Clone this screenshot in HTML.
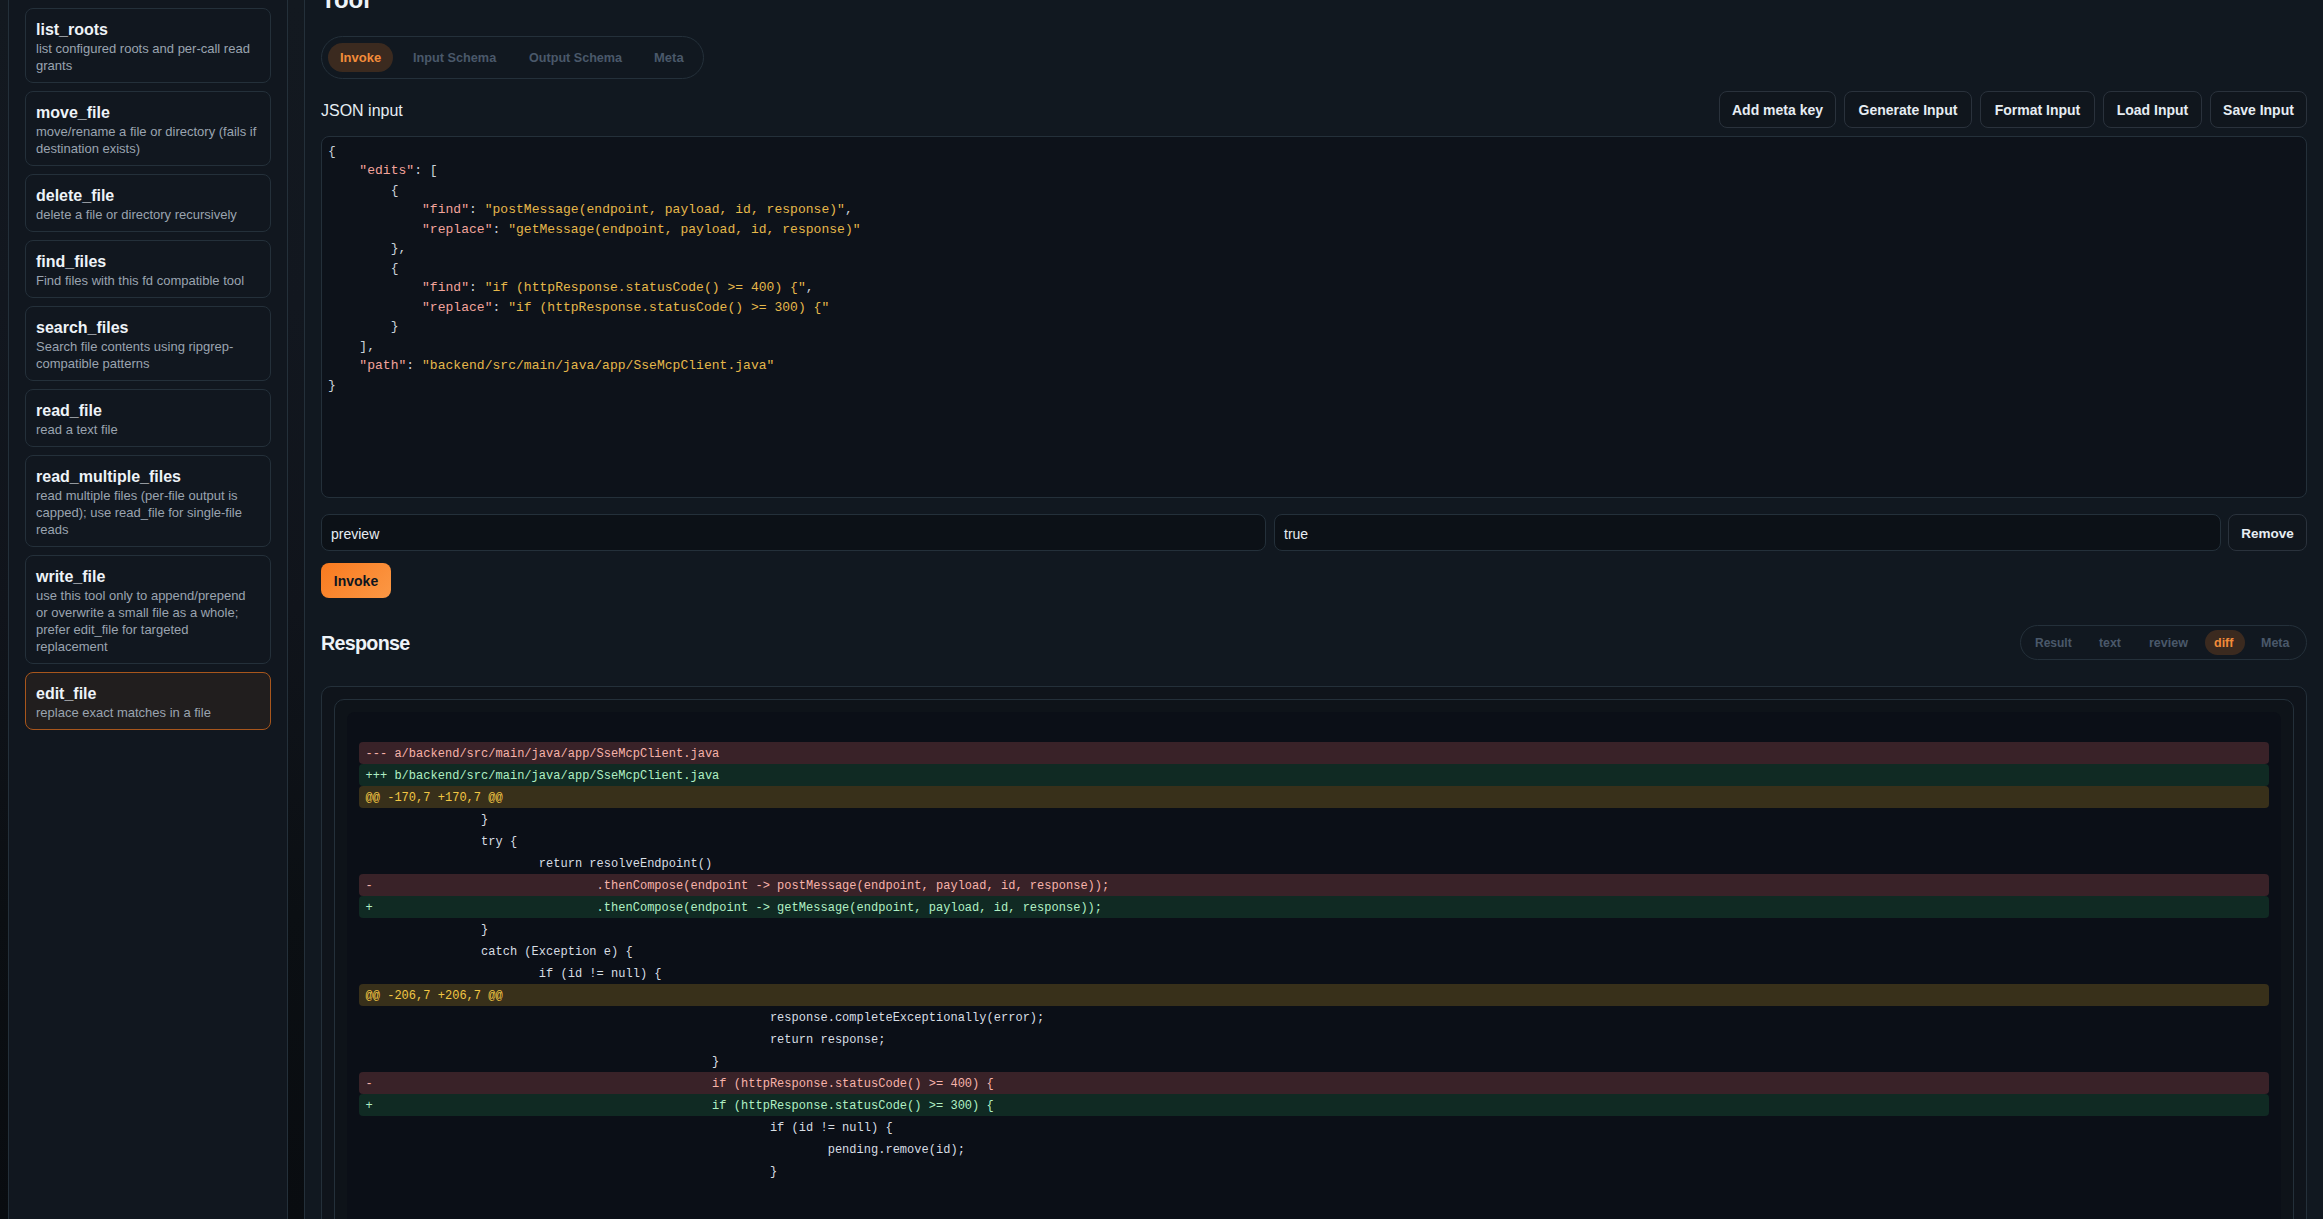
<!DOCTYPE html>
<html><head><meta charset="utf-8">
<style>
*{box-sizing:border-box;margin:0;padding:0}
html,body{width:2323px;height:1219px;overflow:hidden}
body{position:relative;background:linear-gradient(180deg,#131920 0%,#12171f 25%,#10141b 50%,#0b0f13 75%,#090c10 100%);font-family:"Liberation Sans",sans-serif;color:#e6edf3}
.abs{position:absolute}
#side{position:absolute;left:8px;top:-20px;width:280px;height:1300px;background:#11171f;border:1px solid #24303a}
.card{position:absolute;left:25px;width:246px;border:1px solid #24303a;border-radius:8px;background:#11171f;padding:10px 10px 8px 10px}
.card .t{font-size:16px;font-weight:700;line-height:21px;color:#eef3f8;white-space:nowrap}
.card .d{font-size:13px;line-height:17px;color:#9aa4b0}
.card.sel{border-color:#a8561c;background:#211e1e}
#main{position:absolute;left:304px;top:-20px;width:2100px;height:1300px;background:#111820;border-left:1px solid #24303a}
.tabs{position:absolute;border:1px solid #24303a;border-radius:999px}
.tab{position:absolute;font-weight:700;color:#4a586a;white-space:nowrap}
.pill{position:absolute;background:#3b2a1f;border-radius:999px}
.btn{position:absolute;top:91px;height:37px;border:1px solid #2a323c;border-radius:8px;background:#10161d;font-size:14px;font-weight:700;color:#e6edf3;display:flex;align-items:center;justify-content:center;white-space:nowrap}
.mono{font-family:"Liberation Mono",monospace}
#ta{position:absolute;left:321px;top:136px;width:1986px;height:362px;border:1px solid #24303a;border-radius:8px;background:#0d121a}
#json{position:absolute;left:328px;top:141.5px;font-size:13px;line-height:19.5px;letter-spacing:0.03px;color:#c9d1d9;white-space:pre}
.k{color:#f3a49c}.s{color:#e6b84a}
.inp{position:absolute;top:514px;height:37px;border:1px solid #24303a;border-radius:8px;background:#0c1117;font-size:14px;color:#e6edf3;padding-left:9px;line-height:39px}
#out{position:absolute;left:321px;top:686px;width:1986px;height:600px;border:1px solid #24303a;border-radius:10px;background:#0f141b}
#in2{position:absolute;left:334px;top:699px;width:1960px;height:600px;border:1px solid #24303a;border-radius:10px;background:#0e1319}
#pre{position:absolute;left:347px;top:712px;width:1934px;height:600px;border-radius:8px;background:#0b0f17}
.row{position:absolute;left:359px;width:1910px;height:22px;border-radius:4px;font-size:12px;line-height:25px;padding-left:6.5px;letter-spacing:0.02px;white-space:pre;color:#d8dee4;overflow:hidden}
.del{background:#392228;color:#f7b3aa}
.add{background:#102a23;color:#b0f0c4}
.hunk{background:#38301a;color:#f2c744}
</style></head><body>
<div id="side"></div>
<div class="card" style="top:8px;height:75px"><div class="t">list_roots</div><div class="d">list configured roots and per-call read grants</div></div>
<div class="card" style="top:91px;height:75px"><div class="t">move_file</div><div class="d">move/rename a file or directory (fails if destination exists)</div></div>
<div class="card" style="top:174px;height:58px"><div class="t">delete_file</div><div class="d">delete a file or directory recursively</div></div>
<div class="card" style="top:240px;height:58px"><div class="t">find_files</div><div class="d">Find files with this fd compatible tool</div></div>
<div class="card" style="top:306px;height:75px"><div class="t">search_files</div><div class="d">Search file contents using ripgrep-<br>compatible patterns</div></div>
<div class="card" style="top:389px;height:58px"><div class="t">read_file</div><div class="d">read a text file</div></div>
<div class="card" style="top:455px;height:92px"><div class="t">read_multiple_files</div><div class="d">read multiple files (per-file output is capped); use read_file for single-file reads</div></div>
<div class="card" style="top:555px;height:109px"><div class="t">write_file</div><div class="d">use this tool only to append/prepend or overwrite a small file as a whole; prefer edit_file for targeted replacement</div></div>
<div class="card sel" style="top:672px;height:58px"><div class="t">edit_file</div><div class="d">replace exact matches in a file</div></div>

<div id="main"></div>
<div class="abs" style="left:321px;top:-14px;font-size:24px;font-weight:700;line-height:28px;color:#eef3f8">Tool</div>

<div class="tabs" style="left:321px;top:36px;width:383px;height:43px"></div>
<div class="pill" style="left:328px;top:43px;width:65px;height:29px"></div>
<div class="tab" style="left:340px;top:50px;font-size:13px;line-height:16px;color:#f28c3a">Invoke</div>
<div class="tab" style="left:413px;top:50px;font-size:12.7px;line-height:16px">Input Schema</div>
<div class="tab" style="left:529px;top:50px;font-size:12.6px;line-height:16px">Output Schema</div>
<div class="tab" style="left:654px;top:50px;font-size:13px;line-height:16px">Meta</div>

<div class="abs" style="left:321px;top:100.5px;font-size:16px;line-height:20px;color:#e6edf3">JSON input</div>
<div class="btn" style="left:1719px;width:117px">Add meta key</div>
<div class="btn" style="left:1844px;width:128px">Generate Input</div>
<div class="btn" style="left:1980px;width:115px">Format Input</div>
<div class="btn" style="left:2103px;width:99px">Load Input</div>
<div class="btn" style="left:2210px;width:97px">Save Input</div>

<div id="ta"></div>
<div id="json" class="mono">{
    <span class="k">"edits"</span>: [
        {
            <span class="k">"find"</span>: <span class="s">"postMessage(endpoint, payload, id, response)"</span>,
            <span class="k">"replace"</span>: <span class="s">"getMessage(endpoint, payload, id, response)"</span>
        },
        {
            <span class="k">"find"</span>: <span class="s">"if (httpResponse.statusCode() &gt;= 400) {"</span>,
            <span class="k">"replace"</span>: <span class="s">"if (httpResponse.statusCode() &gt;= 300) {"</span>
        }
    ],
    <span class="k">"path"</span>: <span class="s">"backend/src/main/java/app/SseMcpClient.java"</span>
}</div>

<div class="inp" style="left:321px;width:945px">preview</div>
<div class="inp" style="left:1274px;width:947px">true</div>
<div class="btn" style="left:2228px;top:514px;width:79px;height:37px;font-size:13.5px;padding-top:2px">Remove</div>

<div class="abs" style="left:321px;top:563px;width:70px;height:35px;border-radius:8px;background:linear-gradient(135deg,#f97a1f,#fb9845);color:#0d1520;font-weight:700;font-size:14px;display:flex;align-items:center;justify-content:center">Invoke</div>

<div class="abs" style="left:321px;top:632.3px;font-size:19.7px;letter-spacing:-0.7px;font-weight:700;line-height:22px;color:#eef3f8">Response</div>
<div class="tabs" style="left:2020px;top:625px;width:287px;height:35px"></div>
<div class="pill" style="left:2205px;top:630px;width:40px;height:25px"></div>
<div class="tab" style="left:2035px;top:636px;font-size:12px;line-height:15px">Result</div>
<div class="tab" style="left:2099px;top:636px;font-size:12.3px;line-height:15px">text</div>
<div class="tab" style="left:2149px;top:636px;font-size:12.5px;line-height:15px">review</div>
<div class="tab" style="left:2214px;top:636px;font-size:12.5px;line-height:15px;color:#f28c3a">diff</div>
<div class="tab" style="left:2261px;top:636px;font-size:12.5px;line-height:15px">Meta</div>

<div id="out"></div>
<div id="in2"></div>
<div id="pre"></div>
<div class="mono">
<div class="row del" style="top:742px">--- a/backend/src/main/java/app/SseMcpClient.java</div>
<div class="row add" style="top:764px">+++ b/backend/src/main/java/app/SseMcpClient.java</div>
<div class="row hunk" style="top:786px">@@ -170,7 +170,7 @@</div>
<div class="row" style="top:808px">                }</div>
<div class="row" style="top:830px">                try {</div>
<div class="row" style="top:852px">                        return resolveEndpoint()</div>
<div class="row del" style="top:874px">-                               .thenCompose(endpoint -&gt; postMessage(endpoint, payload, id, response));</div>
<div class="row add" style="top:896px">+                               .thenCompose(endpoint -&gt; getMessage(endpoint, payload, id, response));</div>
<div class="row" style="top:918px">                }</div>
<div class="row" style="top:940px">                catch (Exception e) {</div>
<div class="row" style="top:962px">                        if (id != null) {</div>
<div class="row hunk" style="top:984px">@@ -206,7 +206,7 @@</div>
<div class="row" style="top:1006px">                                                        response.completeExceptionally(error);</div>
<div class="row" style="top:1028px">                                                        return response;</div>
<div class="row" style="top:1050px">                                                }</div>
<div class="row del" style="top:1072px">-                                               if (httpResponse.statusCode() &gt;= 400) {</div>
<div class="row add" style="top:1094px">+                                               if (httpResponse.statusCode() &gt;= 300) {</div>
<div class="row" style="top:1116px">                                                        if (id != null) {</div>
<div class="row" style="top:1138px">                                                                pending.remove(id);</div>
<div class="row" style="top:1160px">                                                        }</div>
</div>
</body></html>
